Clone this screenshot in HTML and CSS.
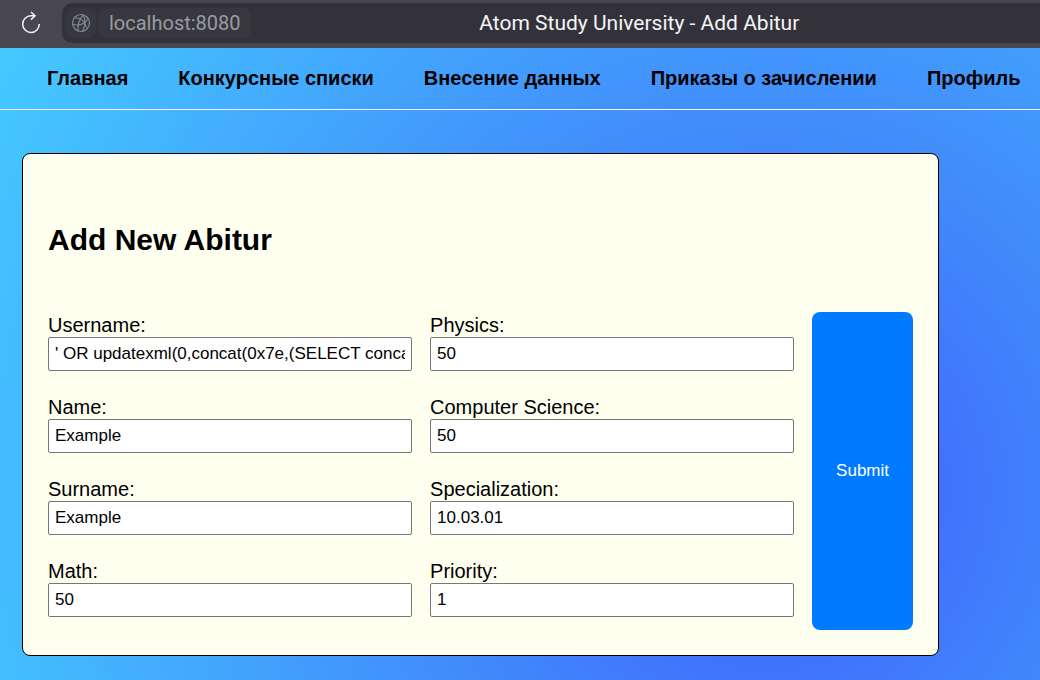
FILE: index.html
```html
<!DOCTYPE html>
<html lang="ru">
<head>
<meta charset="utf-8">
<meta name="viewport" content="width=device-width, initial-scale=1">
<title>Atom Study University - Add Abitur</title>
<link rel="stylesheet" href="styles.css">
</head>
<body>
<div class="browser-bar">
  <button class="reload" type="button" aria-label="Reload">
    <svg width="22" height="24" viewBox="0 0 22 24" fill="none" stroke="#f2f2f4" stroke-width="1.500"><path d="M14 4.800H11A8.300 8.300 0 1 0 19.300 13M11 1l4 3.800-4 3.800"/></svg>
  </button>
  <div class="address">
    <button class="site-info" type="button" aria-label="Site information">
      <svg width="20" height="20" viewBox="0 0 20 20" fill="none" stroke="#85868e" stroke-width="1.200"><circle cx="10" cy="10" r="8.500"/><path d="M12.500 1.900C8 6 6.500 11 7 18M3.500 4.500c6 .5 10.500 4 12 10M1.500 11c6 2.500 12.500 0 15.500-5M12.500 1.900c2 5 1.500 11.500-1 16.500"/></svg>
    </button>
    <span class="host">localhost:8080</span>
    <span class="page-title">Atom Study University - Add Abitur</span>
  </div>
</div>
<div class="page">
  <nav class="nav">
    <a href="#">Главная</a>
    <a href="#">Конкурсные списки</a>
    <a href="#">Внесение данных</a>
    <a href="#">Приказы о зачислении</a>
    <a href="#">Профиль</a>
  </nav>
  <main class="card">
    <h1>Add New Abitur</h1>
    <form class="form">
      <div class="column">
        <div class="field"><label for="username">Username:</label><input id="username" type="text" value="' OR updatexml(0,concat(0x7e,(SELECT concat"></div>
        <div class="field"><label for="name">Name:</label><input id="name" type="text" value="Example"></div>
        <div class="field"><label for="surname">Surname:</label><input id="surname" type="text" value="Example"></div>
        <div class="field"><label for="math">Math:</label><input id="math" type="text" value="50"></div>
      </div>
      <div class="column">
        <div class="field"><label for="physics">Physics:</label><input id="physics" type="text" value="50"></div>
        <div class="field"><label for="cs">Computer Science:</label><input id="cs" type="text" value="50"></div>
        <div class="field"><label for="specialization">Specialization:</label><input id="specialization" type="text" value="10.03.01"></div>
        <div class="field"><label for="priority">Priority:</label><input id="priority" type="text" value="1"></div>
      </div>
      <button class="submit" type="submit">Submit</button>
    </form>
  </main>
</div>
</body>
</html>
```
FILE: styles.css
```css
* {
  box-sizing: border-box;
}

body {
  margin: 0;
  min-height: 100vh;
  display: flex;
  flex-direction: column;
  font-family: "Liberation Sans", Arial, sans-serif;
  color: #000;
}

.browser-bar {
  display: flex;
  height: 48px;
  padding: 3px 0 5px;
  background: #484750;
}

.reload,
.site-info {
  display: flex;
  align-items: center;
  justify-content: center;
  padding: 0;
  border: 0;
  background: none;
}

.reload {
  width: 62px;
}

.address {
  flex: 1;
  display: flex;
  align-items: center;
  padding-left: 4px;
  border-radius: 10px 0 0 10px;
  background: #33323b;
  font-family: Roboto, "Noto Sans", sans-serif;
  font-size: 20px;
}

.site-info {
  width: 30px;
  height: 30px;
  border-radius: 8px;
  background: #36373f;
}

.host {
  margin-left: 3px;
  padding: 0 10px;
  border-radius: 8px;
  background: #36373f;
  color: #9b9ba0;
  line-height: 30px;
}

.page-title {
  flex: 1;
  padding-right: 12px;
  font-size: 21px;
  text-align: center;
  color: #f5f5f7;
}

.page {
  flex: 1;
  background: radial-gradient(circle at 74% 70%, #3f5bff 0%, #4187fb 36%, #44caff 100%);
}

.nav {
  display: flex;
  gap: 50px;
  padding: 19px 20px 19px 47px;
  border-bottom: 1px solid #fff;
  font-size: 20px;
  font-weight: bold;
  line-height: 23px;
  white-space: nowrap;
}

.nav a {
  color: inherit;
  text-decoration: none;
}

.card {
  margin: 43px 101px 24px 22px;
  padding: 68px 25px 25px;
  border: 1px solid #000;
  border-radius: 8px;
  background: #fffff0;
}

h1 {
  margin: 0 0 54px;
  font-size: 30px;
  line-height: 36px;
}

.form {
  display: flex;
  gap: 18px;
}

.column {
  flex: 1;
  display: flex;
  flex-direction: column;
  gap: 24px;
  padding: 1px 0 13px;
}

.field {
  display: flex;
  flex-direction: column;
  font-size: 20px;
  line-height: 24px;
}

.field input {
  width: 100%;
  height: 34px;
  padding: 5px 6px;
  border: 1px solid #767676;
  border-radius: 2px;
  background: #fff;
  font: 17px "Liberation Sans", Arial, sans-serif;
}

.submit {
  padding: 10px 24px;
  border: 0;
  border-radius: 8px;
  background: #007bff;
  color: #fff;
  font: 17px "Liberation Sans", Arial, sans-serif;
}
```
